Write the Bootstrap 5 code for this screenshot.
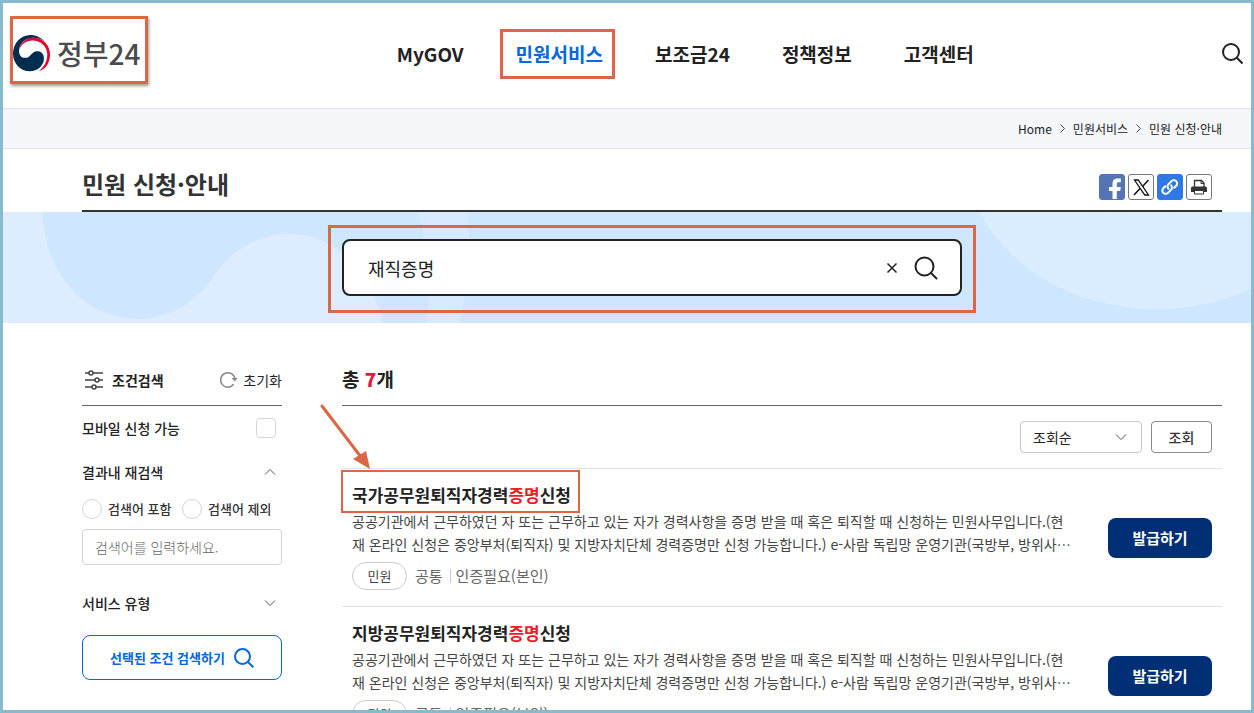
<!DOCTYPE html>
<html lang="ko">
<head>
<meta charset="utf-8">
<meta name="viewport" content="width=device-width, initial-scale=1">
<title>민원 신청·안내 | 정부24</title>
<link rel="stylesheet" href="https://cdn.jsdelivr.net/npm/bootstrap@5.3.0/dist/css/bootstrap.min.css">
<style>
:root { --accent: #db6747; --ink: #222; --blue: #0068e0; --rule: #666; --line: #e0e1e4; }
body { font-family: "Noto Sans CJK KR", "Noto Sans", sans-serif; font-size: 14px; line-height: 22px; color: var(--ink); }
svg { display: block; flex: none; }
a { color: inherit; text-decoration: none; }
.frame { border: 3px solid #87b9cf; }

/* header */
.site-head { height: 106px; padding: 13px 8px 17px; border-bottom: 1px solid #e1e4ee; }
.brand { height: 68px; padding: 6px 5px 0 0; margin-left: -1px; border: 3px solid var(--accent); box-shadow: 1px 2px 3px rgba(0,0,0,.4); font-size: 28px; font-weight: 500; line-height: 40px; color: #4b4b4d; gap: 7px; }
.main-menu { gap: 52px; font-size: 19px; font-weight: 700; line-height: 30px; }
.main-menu .current { color: var(--blue); }
.marked { position: relative; }
.marked::after { content: ""; position: absolute; inset: -10px; border: 3px solid var(--accent); pointer-events: none; }
.main-menu .marked::after { inset: -10px -12px -10px -16px; }
.plain-btn { border: 0; background: none; padding: 0; color: inherit; }

.crumbs { height: 40px; background: #f5f6fa; border-bottom: 1px solid #e4e5e9; font-size: 12px; }
.crumbs, .inset-page { padding-left: 79px; padding-right: 29px; }
.title-row { height: 63px; border-bottom: 2px solid #333; padding: 14px 10px 0 0; }
.title-row h1 { font-size: 24px; font-weight: 700; line-height: 36px; color: #333; padding-bottom: 6px; }
.share { gap: 3px; }
.share a { width: 26px; height: 26px; border: 1px solid #777; border-radius: 3px; overflow: hidden; }
.share .fb { background: #5474b5; border-color: #5474b5; }
.share .copy { background: #2f78e5; border-color: #2f78e5; }

/* search banner */
.banner { height: 111px; background: #cfe6ff; padding-top: 13px; }
.banner-art { position: absolute; inset: 0; width: 100%; height: 100%; }
.search-mark { position: relative; width: 648px; max-width: 100%; padding: 11px 11px 14px; border: 3px solid var(--accent); }
.search-box { height: 57px; border: 2px solid var(--ink); border-radius: 8px; background: #fff; padding: 0 22px 0 24px; }
.search-box input { border: 0; outline: 0; background: none; font-size: 18px; line-height: 28px; padding: 0; color: var(--ink); }

/* side filters */
.columns { gap: 60px; padding-top: 32px; }
.filters { width: 200px; flex: none; }
.sec-head { height: 51px; border-bottom: 1px solid var(--rule); }
.filter-row { height: 44px; padding-right: 6px; font-weight: 500; }
.tick { appearance: none; width: 20px; height: 20px; margin: 0; border: 1px solid #d2d4d8; background: #fff; }
.tick[type=checkbox] { border-radius: 4px; }
.tick[type=radio] { border-radius: 50%; }
.tick:checked { background: var(--blue); }
.pick { height: 30px; font-size: 13px; font-weight: 500; color: #333; }
.pick label { gap: 6px; }
.refine { height: 36px; margin: 5px 0 16px; padding: 0 12px; border: 1px solid #d2d4d8; border-radius: 4px; font-size: 14px; font-weight: 300; }
.refine::placeholder { color: #666; }
.apply { height: 45px; margin-top: 10px; border: 1px solid var(--blue); border-radius: 8px; background: #fff; color: var(--blue); font-size: 13px; font-weight: 700; gap: 9px; }

/* results */
.total { font-size: 19px; font-weight: 700; line-height: 30px; padding-bottom: 2px; }
.total b { color: #e4173e; }
.toolbar { height: 63px; padding-right: 10px; gap: 9px; border-bottom: 1px solid var(--line); }
.sort-wrap { position: relative; width: 122px; }
.sort-wrap select { appearance: none; width: 100%; height: 32px; padding: 0 12px; border: 1px solid #c6c8cc; border-radius: 4px; background: #fff; color: var(--ink); }
.sort-wrap svg { position: absolute; right: 15px; top: 12px; pointer-events: none; }
.view { width: 61px; height: 32px; border: 1px solid #888; border-radius: 4px; background: #fff; color: #333; padding: 0; font-weight: 500; }
.result { height: 138px; padding: 13px 10px 12px; border-bottom: 1px solid var(--line); }
.result h3 { font-size: 17px; font-weight: 700; line-height: 26px; margin: 0 0 2px; width: fit-content; }
.result h3 em { color: #ed1c24; font-style: normal; }
.result h3.marked::after { inset: -12px -9px -5px -11px; border-width: 2px; }
.result p { line-height: 23px; margin: 0 0 6px; color: #444; }
.meta { font-size: 15px; color: #666; }
.kind { width: 55px; height: 28px; border: 1px solid #ccc; border-radius: 14px; font-size: 13px; color: #444; }
.bar { width: 1px; height: 14px; background: #ccc; margin: 0 5px 0 7px; }
.issue { width: 104px; height: 40px; border: 0; border-radius: 8px; background: #002f75; color: #fff; font-size: 15px; font-weight: 700; flex: none; }
.pointer { position: absolute; left: -24px; top: 47px; z-index: 2; pointer-events: none; }
</style>
</head>
<body>
<div class="frame vh-100 overflow-hidden">
  <header class="site-head d-flex align-items-center">
    <a href="#" class="brand d-flex align-items-center align-self-start" aria-label="정부24">
      <svg width="37" height="37" viewBox="0 0 110 110"><path fill="#002c50" d="M96 20C80 4 62 0 52 0 22 0 0 26 0 55c0 30 22 53 50 53 22 0 42-16 42-38 0-14-8-22-20-22-18 0-18 20-36 20-12 0-19-10-18-23C20 24 38 8 60 8c15 0 28 6 36 12Z"/><path fill="#e6002d" d="M18 44C24 18 46 6 64 8c28 2 46 24 46 50 0 24-12 44-34 50 18-14 26-32 26-50 0-24-20-42-44-42-20 0-34 12-40 28Z"/></svg>
      <span>정부24</span>
    </a>
    <nav class="main-menu d-flex mx-auto">
      <a href="#">MyGOV</a>
      <a href="#" class="current marked">민원서비스</a>
      <a href="#">보조금24</a>
      <a href="#">정책정보</a>
      <a href="#">고객센터</a>
    </nav>
    <button class="plain-btn" aria-label="검색"><svg width="21" height="21" viewBox="0 0 21 21" fill="none" stroke="#222" stroke-width="2"><circle cx="9" cy="9" r="8"/><path d="m14.500 14.500 6 6"/></svg></button>
  </header>

  <nav class="crumbs d-flex align-items-center justify-content-end gap-2" aria-label="breadcrumb">
    <a href="#">Home</a>
    <svg width="5" height="9" viewBox="0 0 5 9" fill="none" stroke="#444"><path d="m.5.5 4 4-4 4"/></svg>
    <a href="#">민원서비스</a>
    <svg width="5" height="9" viewBox="0 0 5 9" fill="none" stroke="#444"><path d="m.5.5 4 4-4 4"/></svg>
    <a href="#">민원 신청·안내</a>
  </nav>

  <div class="inset-page">
    <div class="title-row d-flex align-items-center justify-content-between">
      <h1 class="mb-0">민원 신청·안내</h1>
      <div class="share d-flex">
        <a href="#" class="fb" aria-label="페이스북"><svg width="24" height="24" viewBox="0 0 24 24"><path fill="#fff" d="M12.500 25v-9H9v-4h3.500V9c0-4 2-5.500 5-5.500h3.300v3.800h-2c-1.500 0-2 .6-2 2V12h4l-.6 4h-3.400v9Z"/></svg></a>
        <a href="#" aria-label="X"><svg width="24" height="24" viewBox="0 0 24 24" fill="none" stroke="#111"><path stroke-width="1.300" d="M5.500 5h3.700l10.300 15h-3.700Z"/><path stroke-width="1.500" d="m19.500 5-6 6.500M11 13.500 5 20"/></svg></a>
        <a href="#" class="copy" aria-label="링크 복사"><svg width="24" height="24" viewBox="0 0 24 24" fill="none" stroke="#fff" stroke-width="2" stroke-linecap="round"><path d="M10.500 13.800a3.300 3.300 0 0 1 0-4.700l3-3a3.300 3.300 0 0 1 4.700 4.700l-2 2"/><path d="M13 10.200a3.300 3.300 0 0 1 0 4.700l-3 3a3.300 3.300 0 0 1-4.700-4.700l2-2"/></svg></a>
        <a href="#" aria-label="인쇄"><svg width="24" height="24" viewBox="0 0 24 24"><path d="M7.500 12V5.500h7l2.500 2.500V12" fill="none" stroke="#333" stroke-width="1.300"/><path d="M14 5.500V8.500h3" fill="none" stroke="#333"/><path fill="#333" d="M5.500 11.500h13a1.500 1.500 0 0 1 1.500 1.500v4H4v-4a1.500 1.500 0 0 1 1.500-1.500Z"/><path d="M7.500 15.500h9v3.500h-9Z" fill="#fff" stroke="#333"/></svg></a>
      </div>
    </div>
  </div>

  <div class="banner inset-page position-relative">
    <svg class="banner-art" viewBox="0 0 1248 111" preserveAspectRatio="none">
      <path fill="#ddecff" d="M0 0h40c0 60 42 107 94 107 36 0 62-20 78-45 18-26 45-40 75-40 44 0 82 36 92 89H0Z"/>
      <path fill="#d8eaff" d="M415 0h50c3 38 0 78-9 111h-32c4-40 1-78-9-111Z"/>
      <path fill="#daecff" d="M976 0c34 60 98 97 177 97 36 0 68-7 95-20V0Z"/>
    </svg>
    <div class="search-mark mx-auto">
      <form class="search-box d-flex align-items-center" onsubmit="return false">
        <input class="flex-grow-1" type="text" value="재직증명" aria-label="민원 검색어">
        <button type="reset" class="plain-btn me-3" aria-label="지우기"><svg width="12" height="12" viewBox="0 0 12 12" stroke="#222" stroke-width="1.500"><path d="m1.500 1.500 9 9m0-9-9 9"/></svg></button>
        <button class="plain-btn" aria-label="검색"><svg width="24" height="24" viewBox="0 0 24 24" fill="none" stroke="#222" stroke-width="2"><circle cx="10.500" cy="10.500" r="9"/><path stroke-linecap="round" d="m17 17 5.500 5.500"/></svg></button>
      </form>
    </div>
  </div>

  <main class="columns inset-page d-flex">
    <form class="filters" onsubmit="return false">
      <div class="sec-head d-flex align-items-center justify-content-between">
        <div class="d-flex align-items-center gap-2 fw-bold"><svg width="22" height="20" viewBox="0 0 22 20" fill="#fff" stroke="#444" stroke-width="1.500"><path d="M3 3h18M3 10h18M3 17h18"/><circle cx="9" cy="3" r="2"/><circle cx="15" cy="10" r="2"/><circle cx="12" cy="17" r="2"/></svg>조건검색</div>
        <button type="reset" class="plain-btn d-flex align-items-center gap-1 text-dark"><svg width="20" height="18" viewBox="0 0 20 18" fill="none" stroke="#888" stroke-width="1.500"><path d="M14.600 13.300A7.200 7.200 0 1 1 16 8"/><path fill="#888" stroke="none" d="M12.500 7h6L16 10.500Z"/></svg>초기화</button>
      </div>
      <div class="filter-row d-flex align-items-center justify-content-between"><label for="mobile">모바일 신청 가능</label><input class="tick" type="checkbox" id="mobile"></div>
      <button type="button" class="plain-btn filter-row w-100 d-flex align-items-center justify-content-between">결과내 재검색<svg width="12" height="8" viewBox="0 0 12 8" fill="none" stroke="#555"><path d="m1 6.500 5-5 5 5"/></svg></button>
      <div class="pick row g-0 align-items-center">
        <label class="col-6 d-flex align-items-center"><input class="tick" type="radio" name="word">검색어 포함</label>
        <label class="col-6 d-flex align-items-center"><input class="tick" type="radio" name="word">검색어 제외</label>
      </div>
      <input class="refine w-100 d-block" type="text" placeholder="검색어를 입력하세요." aria-label="재검색어">
      <button type="button" class="plain-btn filter-row w-100 d-flex align-items-center justify-content-between">서비스 유형<svg width="12" height="8" viewBox="0 0 12 8" fill="none" stroke="#555"><path d="m1 1.500 5 5 5-5"/></svg></button>
      <button class="apply w-100 d-flex align-items-center justify-content-center">선택된 조건 검색하기<svg width="20" height="20" viewBox="0 0 20 20" fill="none" stroke="#0068e0" stroke-width="2"><circle cx="8.500" cy="8.500" r="7.500"/><path d="m14 14 5.300 5.300"/></svg></button>
    </form>

    <section class="flex-grow-1 position-relative">
      <div class="sec-head d-flex align-items-center"><h2 class="total mb-0">총 <b>7</b>개</h2></div>
      <svg class="pointer" width="56" height="70" viewBox="0 0 56 70"><path stroke="#db6747" stroke-width="3" stroke-linecap="round" d="m4 4 39 51"/><path fill="#db6747" d="m52 67-17-10 13-8Z"/></svg>
      <div class="toolbar d-flex align-items-center justify-content-end">
        <div class="sort-wrap"><select aria-label="정렬"><option>조회순</option><option>가나다순</option></select><svg width="12" height="8" viewBox="0 0 12 8" fill="none" stroke="#555"><path d="m1 1.500 5 5 5-5"/></svg></div>
        <button class="view">조회</button>
      </div>

      <article class="result d-flex align-items-center justify-content-between">
        <div class="text-nowrap align-self-start">
          <h3 class="marked"><a href="#">국가공무원퇴직자경력<em>증명</em>신청</a></h3>
          <p>공공기관에서 근무하였던 자 또는 근무하고 있는 자가 경력사항을 증명 받을 때 혹은 퇴직할 때 신청하는 민원사무입니다.(현<br>재 온라인 신청은 중앙부처(퇴직자) 및 지방자치단체 경력증명만 신청 가능합니다.) e-사람 독립망 운영기관(국방부, 방위사…</p>
          <div class="meta d-flex align-items-center"><span class="kind d-flex align-items-center justify-content-center me-2">민원</span>공통<span class="bar"></span>인증필요(본인)</div>
        </div>
        <button class="issue">발급하기</button>
      </article>

      <article class="result d-flex align-items-center justify-content-between">
        <div class="text-nowrap align-self-start">
          <h3><a href="#">지방공무원퇴직자경력<em>증명</em>신청</a></h3>
          <p>공공기관에서 근무하였던 자 또는 근무하고 있는 자가 경력사항을 증명 받을 때 혹은 퇴직할 때 신청하는 민원사무입니다.(현<br>재 온라인 신청은 중앙부처(퇴직자) 및 지방자치단체 경력증명만 신청 가능합니다.) e-사람 독립망 운영기관(국방부, 방위사…</p>
          <div class="meta d-flex align-items-center"><span class="kind d-flex align-items-center justify-content-center me-2">민원</span>공통<span class="bar"></span>인증필요(본인)</div>
        </div>
        <button class="issue">발급하기</button>
      </article>
    </section>
  </main>
</div>
<script src="https://cdn.jsdelivr.net/npm/bootstrap@5.3.0/dist/js/bootstrap.bundle.min.js"></script>
</body>
</html>
